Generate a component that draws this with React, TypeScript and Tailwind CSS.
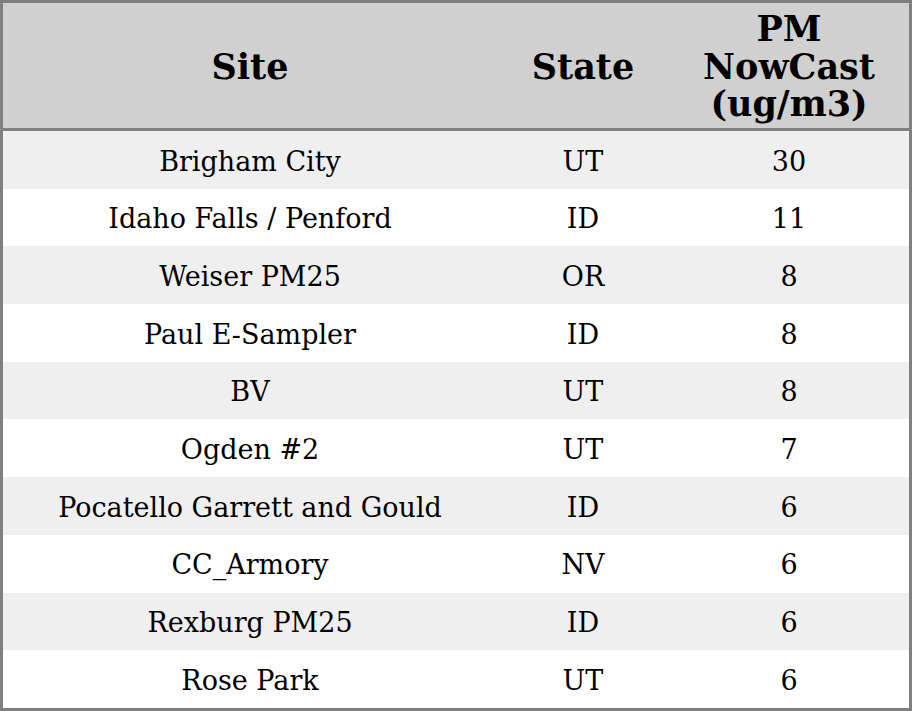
const rows = [
  { site: "Brigham City", state: "UT", pm: "30" },
  { site: "Idaho Falls / Penford", state: "ID", pm: "11" },
  { site: "Weiser PM25", state: "OR", pm: "8" },
  { site: "Paul E-Sampler", state: "ID", pm: "8" },
  { site: "BV", state: "UT", pm: "8" },
  { site: "Ogden #2", state: "UT", pm: "7" },
  { site: "Pocatello Garrett and Gould", state: "ID", pm: "6" },
  { site: "CC_Armory", state: "NV", pm: "6" },
  { site: "Rexburg PM25", state: "ID", pm: "6" },
  { site: "Rose Park", state: "UT", pm: "6" },
];

export default function App() {
  return (
    <div
      className="w-[912px] h-[711px] border-[3px] border-[#808080] bg-white text-black"
      style={{ fontFamily: '"DejaVu Serif", serif' }}
    >
      <div className="grid grid-cols-[494px_172px_240px] h-[128px] pt-[2px] bg-[#d0d0d0] border-b-[3px] border-[#808080] font-bold text-[35px] leading-[37.5px]">
        <div className="flex items-center justify-center text-center">Site</div>
        <div className="flex items-center justify-center text-center">State</div>
        <div className="flex items-center justify-center text-center">
          PM
          <br />
          NowCast
          <br />
          (ug/m3)
        </div>
      </div>
      {rows.map((r, i) => (
        <div
          key={i}
          className={
            "grid grid-cols-[494px_172px_240px] h-[57.7px] pt-1 items-center text-center text-[27px] " +
            (i % 2 === 0 ? "bg-[#efefef]" : "bg-white")
          }
        >
          <div>{r.site}</div>
          <div>{r.state}</div>
          <div>{r.pm}</div>
        </div>
      ))}
    </div>
  );
}
